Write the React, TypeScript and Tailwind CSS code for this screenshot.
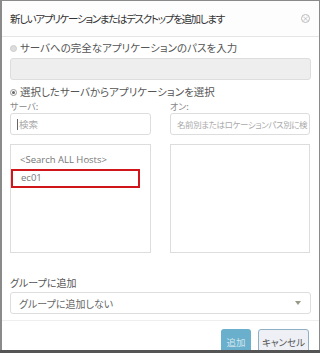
import React from "react";

export default function App() {
  const jp = { fontFamily: '"Noto Sans CJK JP", "Noto Sans", sans-serif', fontFeatureSettings: '"palt"' } as React.CSSProperties;
  const os = { fontFamily: '"Open Sans", "Noto Sans", sans-serif' } as React.CSSProperties;
  return (
    <div className="w-[320px] h-[353px] overflow-hidden bg-[#8a8a8a] flex flex-col" style={jp}>
      <div className="flex-1 ml-[2px] mr-[1px] mt-[1px] bg-white flex flex-col min-h-0">
        <div className="h-[36px] shrink-0 flex items-center justify-between pl-[8px] pr-[9px] border-b border-[#e5e5e5] bg-[#fdfdfd]">
          <span className="text-[10.5px] tracking-[-1.3px] text-[#333] whitespace-nowrap">新しいアプリケーションまたはデスクトップを追加します</span>
          <span className="w-[9px] h-[9px] rounded-full border border-[#bbb] flex items-center justify-center text-[7px] leading-none text-[#aaa]">×</span>
        </div>
        <div className="px-[8px] pt-[4px] flex flex-col">
          <label className="flex items-center gap-[3px] text-[10.5px] text-[#555] h-[14px] leading-[14px] whitespace-nowrap">
            <span className="w-[7px] h-[7px] rounded-full bg-[#ddd] border border-[#ccc]"></span>
            サーバへの完全なアプリケーションのパスを入力
          </label>
          <div className="mt-[3px] h-[22px] rounded-[3px] bg-[#eeeeee] border border-[#dddddd]"></div>
          <label className="mt-[5px] flex items-center gap-[3px] text-[10.5px] text-[#555] h-[14px] leading-[14px] whitespace-nowrap">
            <span className="w-[7px] h-[7px] rounded-full bg-white border border-[#999] flex items-center justify-center"><span className="w-[3px] h-[3px] rounded-full bg-[#666]"></span></span>
            選択したサーバからアプリケーションを選択
          </label>
          <div className="mt-[1px] grid grid-cols-[141px_140px] gap-x-[19px]">
            <div className="flex flex-col">
              <div className="text-[9px] text-[#888] h-[13px] leading-[13px]">サーバ:</div>
              <div className="h-[22px] rounded-[3px] border border-[#ddd] flex items-center px-[6px] text-[9.5px] text-[#aaa]">
                <span className="w-px h-[11px] bg-[#666] mr-[1px]"></span>検索
              </div>
              <div className="mt-[9px] h-[109px] border border-[#ddd] pt-[8px] flex flex-col">
                <div className="px-[9px] text-[9.5px] text-[#777] h-[14px] leading-[14px]" style={os}>&lt;Search ALL Hosts&gt;</div>
                <div className="mt-[2px] w-[129px] h-[19px] border-2 border-[#d0161b] flex items-center pl-[8px] text-[9.5px] text-[#777]" style={os}>ec01</div>
              </div>
            </div>
            <div className="flex flex-col">
              <div className="text-[9px] text-[#888] h-[13px] leading-[13px]">オン:</div>
              <div className="h-[22px] rounded-[3px] border border-[#ddd] flex items-center pl-[6px] text-[8.5px] tracking-[-0.4px] text-[#aaa] whitespace-nowrap">
                名前別またはロケーションパス別に検
              </div>
              <div className="mt-[9px] h-[109px] border border-[#ddd]"></div>
            </div>
          </div>
          <div className="mt-[23px] text-[10px] text-[#555] h-[14px] leading-[14px]">グループに追加</div>
          <div className="mt-[2px] h-[22px] rounded-[3px] border border-[#ddd] flex items-center justify-between pl-[8px] pr-[9px] text-[10px] text-[#666]">
            グループに追加しない
            <span className="w-0 h-0 border-l-[3px] border-r-[3px] border-t-[4px] border-l-transparent border-r-transparent border-t-[#998]"></span>
          </div>
        </div>
        <div className="mt-[6px] border-t border-[#eee] flex justify-end gap-[7px] pr-[10px] pt-[8px]">
          <div className="w-[30px] h-[26px] shrink-0 rounded-[3px] bg-[#6ab0cc] text-white/70 text-[9.5px] flex items-center justify-center">追加</div>
          <div className="w-[51px] h-[26px] shrink-0 rounded-[3px] bg-[#eef0f5] border border-[#8fb0c4] text-[#555] text-[9.5px] flex items-center justify-center">キャンセル</div>
        </div>
      </div>
      <div className="h-[3px] shrink-0 bg-[#555]"></div>
    </div>
  );
}
